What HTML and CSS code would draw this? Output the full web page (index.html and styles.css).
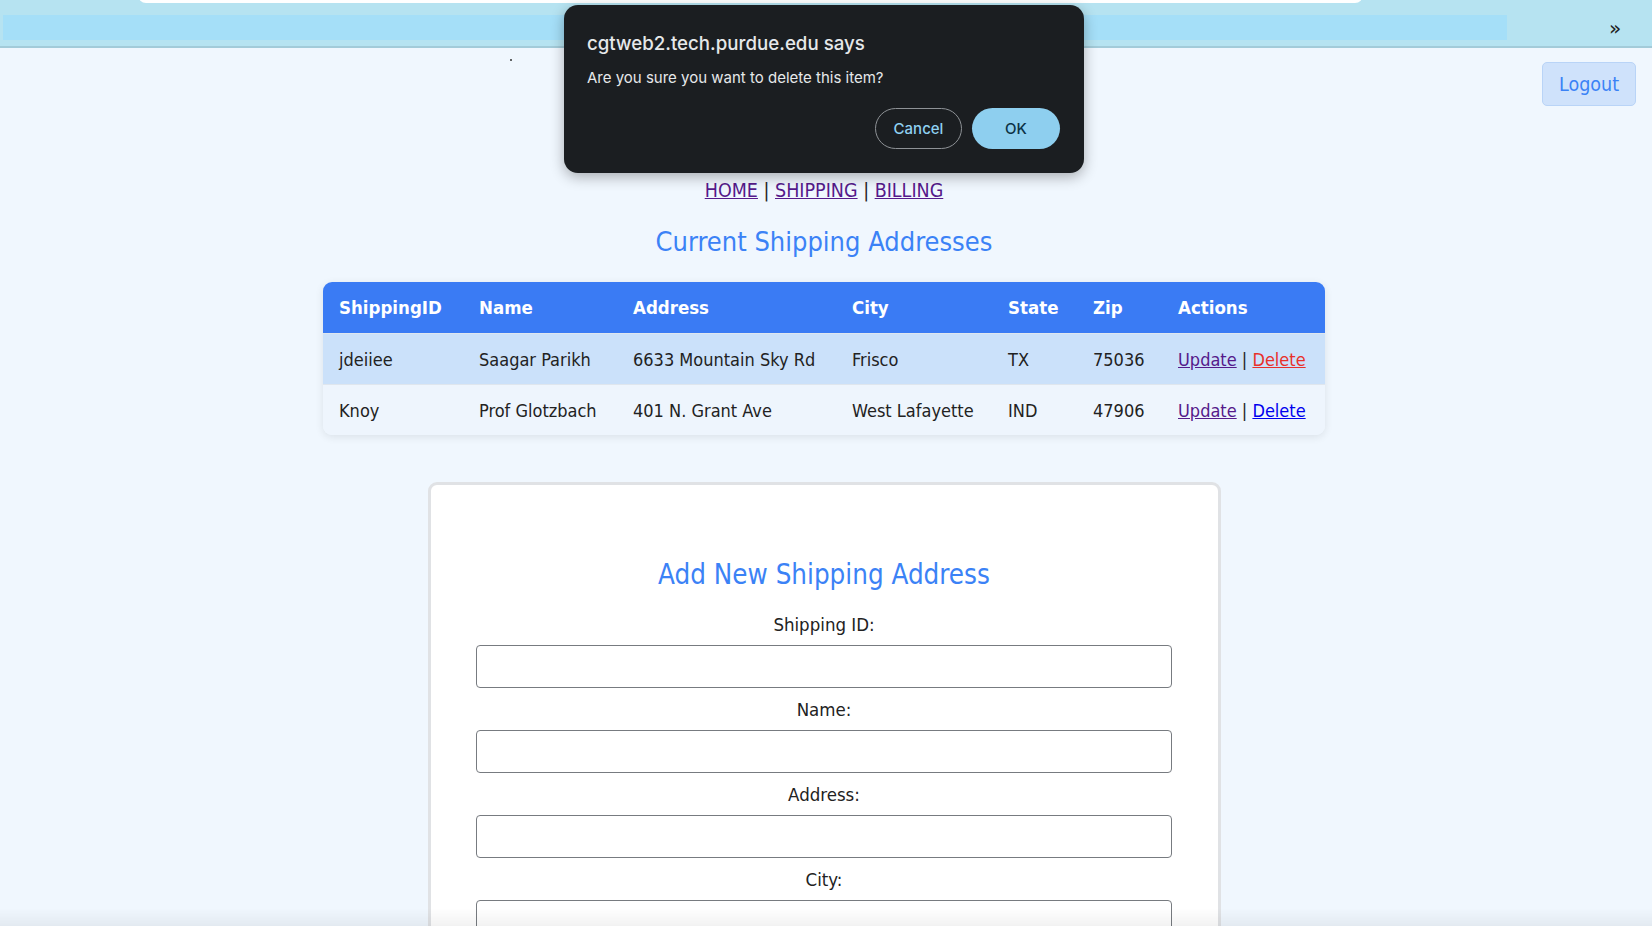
FILE: index.html
```html
<!DOCTYPE html>
<html lang="en">
<head>
<meta charset="utf-8">
<title>Shipping</title>
<link rel="stylesheet" href="styles.css">
</head>
<body>
<div class="topbar">
  <div class="urlbar"></div>
  <div class="strip"></div>
  <div class="chev">&raquo;</div>
</div>
<div class="dot"></div>
<main class="page">
  <div class="logout-row"><button class="logout">Logout</button></div>
  <nav class="nav"><a href="#" class="visited">HOME</a> | <a href="#" class="visited">SHIPPING</a> | <a href="#" class="visited">BILLING</a></nav>
  <h2 class="title">Current Shipping Addresses</h2>
  <table class="grid">
    <colgroup>
      <col class="c1"><col class="c2"><col class="c3"><col class="c4"><col class="c5"><col class="c6"><col class="c7">
    </colgroup>
    <thead>
      <tr><th>ShippingID</th><th>Name</th><th>Address</th><th>City</th><th>State</th><th>Zip</th><th>Actions</th></tr>
    </thead>
    <tbody>
      <tr class="hover"><td>jdeiiee</td><td>Saagar Parikh</td><td>6633 Mountain Sky Rd</td><td>Frisco</td><td>TX</td><td>75036</td><td><a href="#" class="visited">Update</a> | <a href="#" class="danger">Delete</a></td></tr>
      <tr><td>Knoy</td><td>Prof Glotzbach</td><td>401 N. Grant Ave</td><td>West Lafayette</td><td>IND</td><td>47906</td><td><a href="#" class="visited">Update</a> | <a href="#" class="plain">Delete</a></td></tr>
    </tbody>
  </table>
  <section class="card">
    <h2 class="title card-title">Add New Shipping Address</h2>
    <form class="form">
      <label class="lbl">Shipping ID:</label>
      <input class="field" type="text">
      <label class="lbl">Name:</label>
      <input class="field" type="text">
      <label class="lbl">Address:</label>
      <input class="field" type="text">
      <label class="lbl">City:</label>
      <input class="field" type="text">
    </form>
  </section>
</main>
<div class="dialog">
  <div class="dlg-title">cgtweb2.tech.purdue.edu says</div>
  <div class="dlg-msg">Are you sure you want to delete this item?</div>
  <div class="dlg-actions">
    <button class="btn-cancel">Cancel</button>
    <button class="btn-ok">OK</button>
  </div>
</div>
<div class="bottom-fade"></div>
</body>
</html>
```
FILE: styles.css
```css
html, body {
  margin: 0;
  padding: 0;
  height: 100%;
  overflow: hidden;
}
body {
  background: #f0f7fe;
  font-family: "DejaVu Sans Condensed", "DejaVu Sans", sans-serif;
  font-stretch: condensed;
  color: #222;
}
.topbar {
  position: relative;
  height: 46px;
  background: #b6e3f1;
  border-bottom: 2px solid #a3cbd9;
}
.urlbar {
  position: absolute;
  left: 138px;
  width: 1225px;
  top: -8px;
  height: 11px;
  background: #fff;
  border-radius: 0 0 8px 8px;
}
.strip {
  position: absolute;
  left: 3px;
  top: 15px;
  width: 1504px;
  height: 25px;
  background: #a5dff8;
}
.chev {
  position: absolute;
  left: 1609px;
  top: 15px;
  font-family: "DejaVu Sans", sans-serif;
  font-stretch: normal;
  font-size: 20px;
  line-height: 26px;
  color: #222;
}
.dot {
  position: absolute;
  left: 510px;
  top: 59px;
  width: 2px;
  height: 2px;
  background: #333;
  border-radius: 50%;
}
.page {
  padding-right: 4px;
  display: flex;
  flex-direction: column;
  align-items: center;
}
.logout-row {
  align-self: stretch;
  display: flex;
  justify-content: flex-end;
  padding: 14px 12px 0 0;
}
.logout {
  width: 94px;
  height: 44px;
  background: #cfe2fb;
  border: 1px solid #b9d4f7;
  border-radius: 5px;
  color: #3b82f6;
  font-family: "DejaVu Sans Condensed", "DejaVu Sans", sans-serif;
  font-stretch: condensed;
  font-size: 19.5px;
  padding: 0;
}
.nav {
  margin-top: 73px;
  font-size: 19.5px;
  line-height: 23px;
  color: #222;
}
a.visited { color: #551a8b; }
a.danger { color: #e8302a; }
a.plain { color: #0000ee; }
.title {
  margin: 23px 0 0;
  font-size: 27px;
  line-height: 34px;
  font-weight: normal;
  color: #3b82f6;
}
.grid {
  margin-top: 23px;
  width: 1002px;
  table-layout: fixed;
  border-collapse: separate;
  border-spacing: 0;
  border-radius: 9px;
  overflow: hidden;
  box-shadow: 0 2px 8px rgba(0, 0, 0, 0.09);
  font-size: 18px;
}
.c1 { width: 140px; }
.c2 { width: 154px; }
.c3 { width: 219px; }
.c4 { width: 156px; }
.c5 { width: 85px; }
.c6 { width: 85px; }
.c7 { width: 163px; }
.grid th {
  background: #3a7bf4;
  color: #fff;
  font-weight: bold;
  font-size: 18.5px;
  text-align: left;
  height: 51px;
  padding: 0 16px;
  white-space: nowrap;
}
.grid td {
  height: 50px;
  padding: 0 16px;
  background: #eef5fd;
  border-top: 1px solid #dfe6ee;
  white-space: nowrap;
}
.grid tr.hover td {
  background: #cbe1fa;
}
.card {
  margin-top: 47px;
  width: 696px;
  padding: 72px 45.5px 40px;
  background: #fff;
  border: 3px solid #e0e2e5;
  border-radius: 9px;
  display: flex;
  flex-direction: column;
  align-items: center;
}
.card-title {
  margin: 0;
  font-size: 27.5px;
}
.form {
  align-self: stretch;
  display: flex;
  flex-direction: column;
  align-items: center;
}
.lbl {
  margin-top: 11px;
  font-size: 18.5px;
  line-height: 22px;
  color: #222;
}
.lbl:first-child { margin-top: 23px; }
.field {
  margin-top: 9px;
  align-self: stretch;
  box-sizing: border-box;
  height: 43px;
  border: 1px solid #777b80;
  border-radius: 4px;
  background: #fff;
}
.dialog {
  position: absolute;
  left: 564px;
  top: 5px;
  width: 520px;
  height: 168px;
  box-sizing: border-box;
  padding: 26px 24px 0 23px;
  background: #1b1e21;
  border-radius: 14px;
  box-shadow: 0 4px 14px rgba(0, 0, 0, 0.3);
  font-family: Inter, "Noto Sans", sans-serif;
  font-stretch: normal;
  color: #e6e8ea;
}
.dlg-title {
  font-size: 18.7px;
  font-weight: 500;
  line-height: 26px;
}
.dlg-msg {
  margin-top: 11px;
  font-size: 15px;
  line-height: 20px;
}
.dlg-actions {
  margin-top: 20px;
  display: flex;
  justify-content: flex-end;
  gap: 10px;
}
.btn-cancel, .btn-ok {
  height: 41px;
  border-radius: 21px;
  font-family: Inter, "Noto Sans", sans-serif;
  font-size: 15px;
  font-weight: 500;
  padding: 0;
}
.btn-cancel {
  width: 87px;
  background: transparent;
  border: 1px solid #8e9296;
  color: #8fd1f2;
}
.btn-ok {
  width: 88px;
  background: #8ecfef;
  border: none;
  color: #0c3246;
}
.bottom-fade {
  position: fixed;
  left: 0;
  right: 0;
  bottom: 0;
  height: 18px;
  background: linear-gradient(to bottom, rgba(0, 0, 0, 0), rgba(0, 0, 0, 0.05));
  pointer-events: none;
}
```
